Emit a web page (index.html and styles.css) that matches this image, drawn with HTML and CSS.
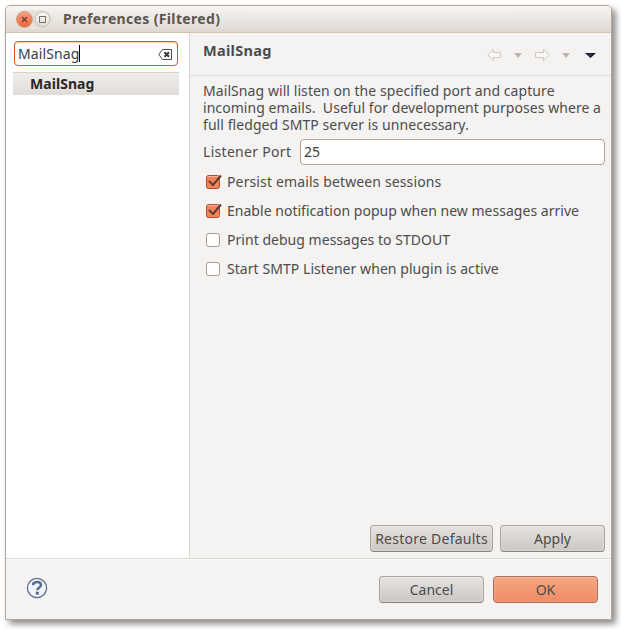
FILE: index.html
```html
<!DOCTYPE html>
<html lang="en">
<head>
<meta charset="utf-8">
<title>Preferences (Filtered)</title>
<link rel="stylesheet" href="styles.css">
</head>
<body>
<div class="window">
  <header class="titlebar">
    <svg class="controls" width="38" height="20" viewBox="0 0 38 20">
      <defs>
        <linearGradient id="orange" x1="0" y1="0" x2="0" y2="1"><stop offset="0" stop-color="#f9a183"/><stop offset="1" stop-color="#ee6537"/></linearGradient>
        <linearGradient id="grey" x1="0" y1="0" x2="0" y2="1"><stop offset="0" stop-color="#fbfaf8"/><stop offset="1" stop-color="#dedad3"/></linearGradient>
      </defs>
      <rect x="0" y="0" width="37" height="19" rx="9.500" fill="#e6e1db"/>
      <circle cx="9.500" cy="9.500" r="7.800" fill="url(#orange)" stroke="#d68e74"/>
      <path d="M7 7l5 5M12 7l-5 5" stroke="#68392a" stroke-width="1.200"/>
      <circle cx="27.500" cy="9.500" r="7.500" fill="url(#grey)" stroke="#c3bcb4"/>
      <rect x="24.500" y="6.500" width="6" height="6" fill="none" stroke="#77736b"/>
    </svg>
    <h1 class="title">Preferences (Filtered)</h1>
  </header>
  <div class="main">
    <aside class="sidebar">
      <div class="search">
        <span class="query">MailSnag</span><i class="caret"></i>
        <svg class="clear" width="15" height="11" viewBox="0 0 15 11"><path d="M4.500 .5H13.500V10.500H4.500L.8 5.500z" fill="#fff" stroke="#4c4c4c"/><path d="M6.500 3.300l4.500 4.500M11 3.300l-4.500 4.500" stroke="#3c3c3c" stroke-width="2"/></svg>
      </div>
      <div class="tree-item">MailSnag</div>
    </aside>
    <section class="page">
      <div class="page-head">
        <h2 class="page-title">MailSnag</h2>
        <svg class="nav" width="110" height="14" viewBox="0 0 110 14">
          <path d="M.8 7L6.500 1.300V4.500H13.500V9.500H6.500V12.700z" fill="#f8f7f6" stroke="#cdc9c2"/>
          <path d="M27 5h8l-4 5z" fill="#beb6ac"/>
          <path d="M62.200 7L56.500 1.300V4.500H48.500V9.500H56.500V12.700z" fill="#f8f7f6" stroke="#cdc9c2"/>
          <path d="M75 5h8l-4 5z" fill="#beb6ac"/>
          <path d="M98 5h11l-5.500 5z" fill="#17152c"/><path d="M101 6h4l-2 2.500z" fill="#3c3980"/>
        </svg>
      </div>
      <div class="content">
        <p class="description"><span class="line d1">MailSnag will listen on the specified port and capture</span><span class="line d2">incoming emails.&nbsp; Useful for development purposes where a</span><span class="line d3">full fledged SMTP server is unnecessary.</span></p>
        <div class="field"><span class="field-label">Listener Port</span><div class="input">25</div></div>
        <div class="option"><svg class="check" width="18" height="18" viewBox="0 0 18 18"><rect x="1.500" y="3.500" width="13" height="13" rx="2" fill="#f58258" stroke="#a8502f"/><path d="M2.500 4.500h11" stroke="#fbb095"/><path d="M4 9l4 4 8-9.500" fill="none" stroke="#5f3a30" stroke-width="2"/></svg><span class="c1">Persist emails between sessions</span></div>
        <div class="option"><svg class="check" width="18" height="18" viewBox="0 0 18 18"><rect x="1.500" y="3.500" width="13" height="13" rx="2" fill="#f58258" stroke="#a8502f"/><path d="M2.500 4.500h11" stroke="#fbb095"/><path d="M4 9l4 4 8-9.500" fill="none" stroke="#5f3a30" stroke-width="2"/></svg><span class="c2">Enable notification popup when new messages arrive</span></div>
        <div class="option"><svg class="check" width="18" height="18" viewBox="0 0 18 18"><rect x="1.500" y="3.500" width="13" height="13" rx="2" fill="#fff" stroke="#a69b91"/></svg><span class="c3">Print debug messages to STDOUT</span></div>
        <div class="option"><svg class="check" width="18" height="18" viewBox="0 0 18 18"><rect x="1.500" y="3.500" width="13" height="13" rx="2" fill="#fff" stroke="#a69b91"/></svg><span class="c4">Start SMTP Listener when plugin is active</span></div>
        <div class="page-actions"><div class="button restore">Restore Defaults</div><div class="button apply">Apply</div></div>
      </div>
    </section>
  </div>
  <footer class="footer">
    <svg class="help" width="22" height="22" viewBox="0 0 22 22"><circle cx="11" cy="11" r="9.600" fill="#f3f4f7" stroke="#5b7191" stroke-width="1.300"/><path d="M7.300 8.300V6.500Q9 5 11 5C14 5 15 6.400 15 8C15 10.500 11.300 10.500 11.300 13.300" fill="none" stroke="#566c95" stroke-width="2.500"/><rect x="9.800" y="14.700" width="3" height="3" fill="#566c95"/></svg>
    <div class="button cancel">Cancel</div>
    <div class="button ok">OK</div>
  </footer>
</div>
</body>
</html>
```

FILE: styles.css
```css
* { box-sizing: border-box; }
body { margin: 0; padding: 5px; height: 629px; overflow: hidden; background: #fff; color: #4c4c4c; font: 14px/17px "Noto Sans", "Open Sans", sans-serif; white-space: nowrap; }
svg { flex: none; display: block; }
.window { width: 607px; height: 615px; border: 1px solid #b2a69c; border-radius: 5px 5px 0 0; background: #f4f3f2; box-shadow: 4px 4px 6px rgba(0,0,0,.45); display: flex; flex-direction: column; overflow: hidden; }
.titlebar { height: 27px; flex: none; display: flex; align-items: center; padding: 0 0 0 9px; background: linear-gradient(#f7f5f3, #ded8d1); border-bottom: 1px solid #d2c4b5; }
.controls { margin-top: 2px; }
.title { margin: 0 0 1px 10px; font-size: 14px; font-weight: 700; letter-spacing: .35px; color: #5c5550; }
.main { flex: 1; display: flex; border-bottom: 1px solid #dcd6d1; min-height: 0; }
.sidebar { width: 184px; flex: none; background: #fff; border-right: 1px solid #dcd8d4; padding: 8px 8px 0 7px; }
.search { width: 164px; height: 25px; margin-left: 1px; border: 1px solid #d7572b; border-radius: 4px; box-shadow: inset 0 1px #f8ceb9; display: flex; align-items: center; padding: 0 4px 0 3px; color: #3c3c3c; }
.query { letter-spacing: .1px; }
.caret { width: 1px; height: 17px; background: #000; }
.clear { margin-left: auto; margin-top: 1px; }
.tree-item { margin-top: 6px; width: 166px; height: 23px; border-top: 1px solid #d8d2cc; background: linear-gradient(#efedeb, #e0dcd8); padding: 1px 17px; line-height: 20px; letter-spacing: .05px; font-weight: 700; color: #2c2826; }
.page { flex: 1; display: flex; flex-direction: column; }
.page-head { height: 43px; flex: none; border-bottom: 1px solid #dedad7; display: flex; justify-content: space-between; align-items: center; padding: 0 14px 6px 13px; }
.page-title { margin: 0 0 2px; font-size: 14.5px; letter-spacing: .3px; font-weight: 700; }
.nav { margin-top: 8px; }
.content { flex: 1; display: flex; flex-direction: column; padding: 6px 6px 6px 13px; }
.description { margin: 0 0 6px; }
.line { display: block; width: max-content; }
.d1 { letter-spacing: .075px; }
.d2 { letter-spacing: .055px; }
.d3 { letter-spacing: .07px; }
.field { display: flex; height: 26px; align-items: center; margin-bottom: 7px; }
.field-label { width: 97px; letter-spacing: .3px; padding-bottom: 2px; }
.input { flex: 1; height: 26px; border: 1px solid #b2a195; border-radius: 4px; background: #fff; padding: 3px; color: #3c3c3c; }
.option { height: 18px; display: flex; align-items: center; margin-bottom: 11px; padding-left: 2px; }
.check { margin-right: 4px; }
.c1 { letter-spacing: .13px; }
.c2 { letter-spacing: .025px; }
.c3 { letter-spacing: .03px; }
.c4 { letter-spacing: .06px; }
.page-actions { margin-top: auto; display: flex; justify-content: flex-end; gap: 7px; }
.button { height: 27px; border: 1px solid #aaa39e; border-bottom-color: #88827d; border-radius: 4px; background: linear-gradient(#e5e2e0, #ccc7c3); box-shadow: inset 0 1px #eeecea, inset 0 0 3px #e7e3df; display: flex; align-items: center; justify-content: center; padding-bottom: 1px; }
.restore { width: 123px; letter-spacing: .25px; } .apply, .cancel, .ok { width: 105px; }
.footer { height: 60px; flex: none; display: flex; align-items: center; padding: 0 13px 0 20px; gap: 9px; border-top: 1px solid #fbfafa; }
.help { margin-bottom: 3px; }
.cancel { margin-left: auto; }
.ok { border-color: #a36e5b; background: linear-gradient(#f6a684, #ee8b64); box-shadow: inset 0 1px #fbb69a, inset 0 0 3px #f7b195; }
```
